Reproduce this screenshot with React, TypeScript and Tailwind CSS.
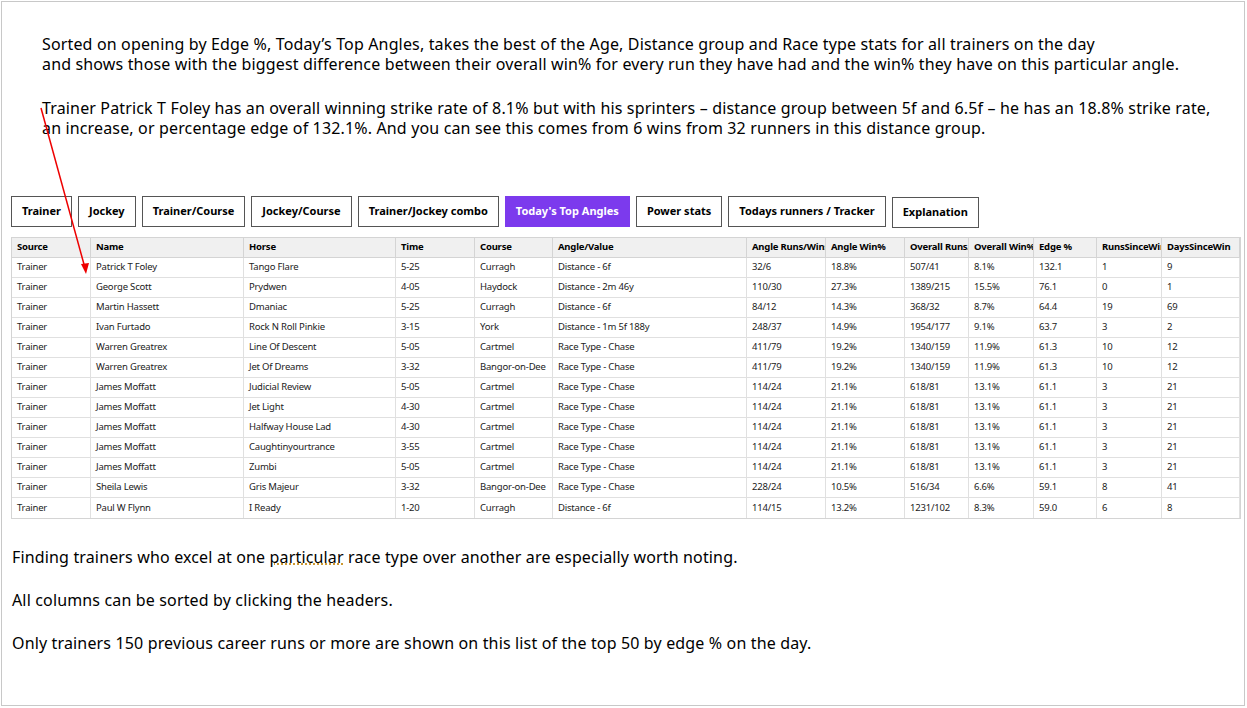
import React from 'react';

const tabs = ['Trainer', 'Jockey', 'Trainer/Course', 'Jockey/Course', 'Trainer/Jockey combo', "Today's Top Angles", 'Power stats', 'Todays runners / Tracker', 'Explanation'];

const cols = [
  { label: 'Source', w: 'w-[79px]' },
  { label: 'Name', w: 'w-[153px]' },
  { label: 'Horse', w: 'w-[152px]' },
  { label: 'Time', w: 'w-[79px]' },
  { label: 'Course', w: 'w-[78px]' },
  { label: 'Angle/Value', w: 'w-[194px]' },
  { label: 'Angle Runs/Wins', w: 'w-[79px]' },
  { label: 'Angle Win%', w: 'w-[79px]' },
  { label: 'Overall Runs/Wins', w: 'w-[64px]' },
  { label: 'Overall Win%', w: 'w-[65px]' },
  { label: 'Edge %', w: 'w-[63px]' },
  { label: 'RunsSinceWin', w: 'w-[65px]' },
  { label: 'DaysSinceWin', w: 'w-[78px]' },
];

const rows = [
  ['Trainer', 'Patrick T Foley', 'Tango Flare', '5-25', 'Curragh', 'Distance - 6f', '32/6', '18.8%', '507/41', '8.1%', '132.1', '1', '9'],
  ['Trainer', 'George Scott', 'Prydwen', '4-05', 'Haydock', 'Distance - 2m 46y', '110/30', '27.3%', '1389/215', '15.5%', '76.1', '0', '1'],
  ['Trainer', 'Martin Hassett', 'Dmaniac', '5-25', 'Curragh', 'Distance - 6f', '84/12', '14.3%', '368/32', '8.7%', '64.4', '19', '69'],
  ['Trainer', 'Ivan Furtado', 'Rock N Roll Pinkie', '3-15', 'York', 'Distance - 1m 5f 188y', '248/37', '14.9%', '1954/177', '9.1%', '63.7', '3', '2'],
  ['Trainer', 'Warren Greatrex', 'Line Of Descent', '5-05', 'Cartmel', 'Race Type - Chase', '411/79', '19.2%', '1340/159', '11.9%', '61.3', '10', '12'],
  ['Trainer', 'Warren Greatrex', 'Jet Of Dreams', '3-32', 'Bangor-on-Dee', 'Race Type - Chase', '411/79', '19.2%', '1340/159', '11.9%', '61.3', '10', '12'],
  ['Trainer', 'James Moffatt', 'Judicial Review', '5-05', 'Cartmel', 'Race Type - Chase', '114/24', '21.1%', '618/81', '13.1%', '61.1', '3', '21'],
  ['Trainer', 'James Moffatt', 'Jet Light', '4-30', 'Cartmel', 'Race Type - Chase', '114/24', '21.1%', '618/81', '13.1%', '61.1', '3', '21'],
  ['Trainer', 'James Moffatt', 'Halfway House Lad', '4-30', 'Cartmel', 'Race Type - Chase', '114/24', '21.1%', '618/81', '13.1%', '61.1', '3', '21'],
  ['Trainer', 'James Moffatt', 'Caughtinyourtrance', '3-55', 'Cartmel', 'Race Type - Chase', '114/24', '21.1%', '618/81', '13.1%', '61.1', '3', '21'],
  ['Trainer', 'James Moffatt', 'Zumbi', '5-05', 'Cartmel', 'Race Type - Chase', '114/24', '21.1%', '618/81', '13.1%', '61.1', '3', '21'],
  ['Trainer', 'Sheila Lewis', 'Gris Majeur', '3-32', 'Bangor-on-Dee', 'Race Type - Chase', '228/24', '10.5%', '516/34', '6.6%', '59.1', '8', '41'],
  ['Trainer', 'Paul W Flynn', 'I Ready', '1-20', 'Curragh', 'Distance - 6f', '114/15', '13.2%', '1231/102', '8.3%', '59.0', '6', '8'],
];

export default function App() {
  return (
    <div className="w-[1247px] h-[708px] bg-white p-[1px] font-['Noto_Sans',sans-serif]">
      <div className="relative w-[1244px] h-[705px] border border-[#c8c8c8] text-black">
        <div className="pl-[40px] pt-[32px] text-[16px] leading-[20px] tracking-[0.15px] whitespace-nowrap">
          <p>Sorted on opening by Edge %, Today’s Top Angles, takes the best of the Age, Distance group and Race type stats for all trainers on the day</p>
          <p>and shows those with the biggest difference between their overall win% for every run they have had and the win% they have on this particular angle.</p>
          <p className="mt-[24px]">Trainer Patrick T Foley has an overall winning strike rate of 8.1% but with his sprinters – distance group between 5f and 6.5f – he has an 18.8% strike rate,</p>
          <p>an increase, or percentage edge of 132.1%. And you can see this comes from 6 wins from 32 runners in this distance group.</p>
        </div>

        <div className="flex gap-[6px] pl-[9px] mt-[58px]">
          {tabs.map(t => (
            <div
              key={t}
              className={`h-[31px] px-[10px] flex items-center text-[11px] font-bold border ${t === "Today's Top Angles" ? 'bg-[#7c3aed] text-white border-[#7c3aed]' : 'bg-white border-[#555] text-black'} ${t === 'Explanation' ? 'mt-[1px]' : ''}`}
            >
              {t}
            </div>
          ))}
        </div>

        <div className="ml-[9px] mt-[9px] w-[1230px] border border-[#d4d4d4] text-[9.5px] tracking-[-0.2px]">
          <div className="flex h-[20px] bg-[#f0f0f0] border-b border-[#d4d4d4] font-bold">
            {cols.map((c, i) => (
              <div key={i} className={`${c.w} shrink-0 px-[5px] flex items-center overflow-hidden whitespace-nowrap border-r border-[#d4d4d4]`}>{c.label}</div>
            ))}
          </div>
          {rows.map((r, ri) => (
            <div key={ri} className="flex h-[20px] border-b border-[#e0e0e0] last:border-b-0">
              {r.map((v, i) => (
                <div key={i} className={`${cols[i].w} shrink-0 px-[5px] flex items-center overflow-hidden whitespace-nowrap border-r border-[#e0e0e0] text-[#222]`}>{v}</div>
              ))}
            </div>
          ))}
        </div>

        <div className="pl-[10px] mt-[28px] text-[16px] leading-[20px] tracking-[0.15px] space-y-[23px]">
          <p>Finding trainers who excel at one <span className="underline decoration-dotted decoration-[#c08000]">particular</span> race type over another are especially worth noting.</p>
          <p>All columns can be sorted by clicking the headers.</p>
          <p>Only trainers 150 previous career runs or more are shown on this list of the top 50 by edge % on the day.</p>
        </div>

        <svg className="absolute left-0 top-0 pointer-events-none" width="120" height="290">
          <line x1="39" y1="106" x2="83" y2="266" stroke="#e00" strokeWidth="1.5" />
          <polygon points="84,272 79,262 87,261" fill="#e00" />
        </svg>
      </div>
    </div>
  );
}
